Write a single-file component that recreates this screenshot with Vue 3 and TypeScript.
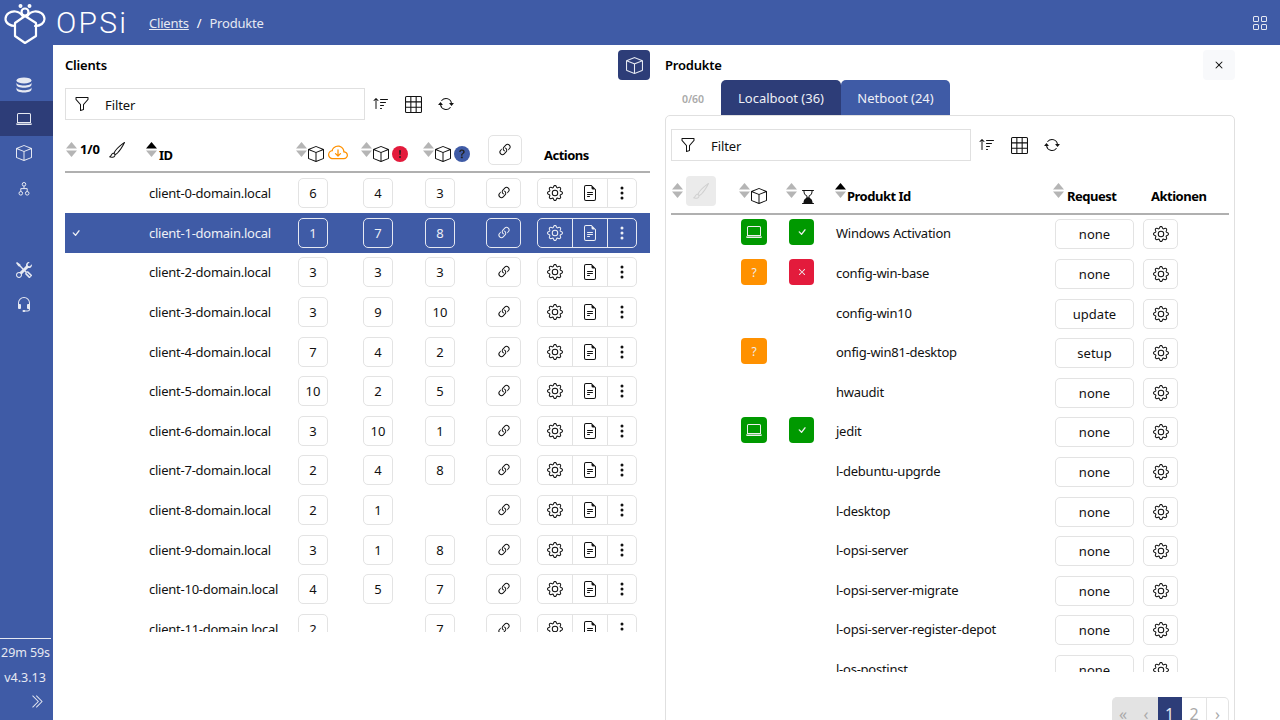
<script setup lang="ts">
const clients: [string, string, string][] = [
  ['6', '4', '3'], ['1', '7', '8'], ['3', '3', '3'], ['3', '9', '10'], ['7', '4', '2'], ['10', '2', '5'],
  ['3', '10', '1'], ['2', '4', '8'], ['2', '1', ''], ['3', '1', '8'], ['4', '5', '7'], ['2', '', '7'],
]
type Prod = { name: string; a?: 'ok' | 'unk'; b?: 'ok' | 'bad'; req: string }
const products: Prod[] = [
  { name: 'Windows Activation', a: 'ok', b: 'ok', req: 'none' },
  { name: 'config-win-base', a: 'unk', b: 'bad', req: 'none' },
  { name: 'config-win10', req: 'update' },
  { name: 'onfig-win81-desktop', a: 'unk', req: 'setup' },
  { name: 'hwaudit', req: 'none' },
  { name: 'jedit', a: 'ok', b: 'ok', req: 'none' },
  { name: 'l-debuntu-upgrde', req: 'none' },
  { name: 'l-desktop', req: 'none' },
  { name: 'l-opsi-server', req: 'none' },
  { name: 'l-opsi-server-migrate', req: 'none' },
  { name: 'l-opsi-server-register-depot', req: 'none' },
  { name: 'l-os-postinst', req: 'none' },
]
const navTop = ['database', 'laptop', 'box', 'diagram']
const navBottom = ['tools', 'headset']
</script>

<template>
  <div class="app">
    <svg class="sprite" aria-hidden="true">
      <symbol id="box" viewBox="0 0 16 16"><path d="M8.186 1.113a.5.5 0 0 0-.372 0L1.846 3.5 8 5.961 14.154 3.5 8.186 1.113zM15 4.239l-6.5 2.6v7.922l6.5-2.6V4.24zM7.5 14.762V6.838L1 4.239v7.925l6.5 2.6zM7.443.184a1.5 1.5 0 0 1 1.114 0l7.129 2.852A.5.5 0 0 1 16 3.5v8.662a1 1 0 0 1-.629.928l-7.185 2.874a.5.5 0 0 1-.372 0L.63 13.09a1 1 0 0 1-.63-.928V3.5a.5.5 0 0 1 .314-.464L7.443.184z"/></symbol>
      <symbol id="laptop" viewBox="0 0 16 16"><path d="M13.5 3a.5.5 0 0 1 .5.5V11H2V3.5a.5.5 0 0 1 .5-.5h11zm-11-1A1.5 1.5 0 0 0 1 3.5V12h14V3.5A1.5 1.5 0 0 0 13.5 2h-11zM0 12.5h16a1.5 1.5 0 0 1-1.5 1.5h-13A1.5 1.5 0 0 1 0 12.5z"/></symbol>
      <symbol id="gear" viewBox="0 0 16 16"><path d="M8 4.754a3.246 3.246 0 1 0 0 6.492 3.246 3.246 0 0 0 0-6.492zM5.754 8a2.246 2.246 0 1 1 4.492 0 2.246 2.246 0 0 1-4.492 0z"/><path d="M9.796 1.343c-.527-1.79-3.065-1.79-3.592 0l-.094.319a.873.873 0 0 1-1.255.52l-.292-.16c-1.64-.892-3.433.902-2.54 2.541l.159.292a.873.873 0 0 1-.52 1.255l-.319.094c-1.79.527-1.79 3.065 0 3.592l.319.094a.873.873 0 0 1 .52 1.255l-.16.292c-.892 1.64.901 3.434 2.541 2.54l.292-.159a.873.873 0 0 1 1.255.52l.094.319c.527 1.79 3.065 1.79 3.592 0l.094-.319a.873.873 0 0 1 1.255-.52l.292.16c1.64.893 3.434-.902 2.54-2.541l-.159-.292a.873.873 0 0 1 .52-1.255l.319-.094c1.79-.527 1.79-3.065 0-3.592l-.319-.094a.873.873 0 0 1-.52-1.255l.16-.292c.893-1.64-.902-3.433-2.541-2.54l-.292.159a.873.873 0 0 1-1.255-.52l-.094-.319zm-2.633.283c.246-.835 1.428-.835 1.674 0l.094.319a1.873 1.873 0 0 0 2.693 1.115l.291-.16c.764-.415 1.6.42 1.184 1.185l-.159.292a1.873 1.873 0 0 0 1.116 2.692l.318.094c.835.246.835 1.428 0 1.674l-.319.094a1.873 1.873 0 0 0-1.115 2.693l.16.291c.415.764-.42 1.6-1.185 1.184l-.291-.159a1.873 1.873 0 0 0-2.693 1.116l-.094.318c-.246.835-1.428.835-1.674 0l-.094-.319a1.873 1.873 0 0 0-2.692-1.115l-.292.16c-.764.415-1.6-.42-1.184-1.185l.159-.291A1.873 1.873 0 0 0 1.945 8.93l-.319-.094c-.835-.246-.835-1.428 0-1.674l.319-.094A1.873 1.873 0 0 0 3.06 4.377l-.16-.292c-.415-.764.42-1.6 1.185-1.184l.292.159a1.873 1.873 0 0 0 2.692-1.115l.094-.319z"/></symbol>
      <symbol id="link" viewBox="0 0 16 16"><path d="M4.715 6.542 3.343 7.914a3 3 0 1 0 4.243 4.243l1.828-1.829A3 3 0 0 0 8.586 5.5L8 6.086a1.002 1.002 0 0 0-.154.199 2 2 0 0 1 .861 3.337L6.88 11.45a2 2 0 1 1-2.83-2.83l.793-.792a4.018 4.018 0 0 1-.128-1.287z"/><path d="M6.586 4.672A3 3 0 0 0 7.414 9.5l.775-.776a2 2 0 0 1-.896-3.346L9.12 3.55a2 2 0 1 1 2.83 2.83l-.793.792c.112.42.155.855.128 1.287l1.372-1.372a3 3 0 1 0-4.243-4.243L6.586 4.672z"/></symbol>
      <symbol id="dots" viewBox="0 0 16 16"><path d="M9.5 13a1.5 1.5 0 1 1-3 0 1.5 1.5 0 0 1 3 0zm0-5a1.5 1.5 0 1 1-3 0 1.5 1.5 0 0 1 3 0zm0-5a1.5 1.5 0 1 1-3 0 1.5 1.5 0 0 1 3 0z"/></symbol>
      <symbol id="file" viewBox="0 0 16 16"><path d="M5.5 7a.5.5 0 0 0 0 1h5a.5.5 0 0 0 0-1h-5zM5 9.5a.5.5 0 0 1 .5-.5h5a.5.5 0 0 1 0 1h-5a.5.5 0 0 1-.5-.5zm0 2a.5.5 0 0 1 .5-.5h2a.5.5 0 0 1 0 1h-2a.5.5 0 0 1-.5-.5z"/><path d="M9.5 0H4a2 2 0 0 0-2 2v12a2 2 0 0 0 2 2h8a2 2 0 0 0 2-2V4.5L9.5 0zm0 1v2A1.5 1.5 0 0 0 11 4.5h2V14a1 1 0 0 1-1 1H4a1 1 0 0 1-1-1V2a1 1 0 0 1 1-1h5.5z"/></symbol>
      <symbol id="funnel" viewBox="0 0 16 16"><path d="M1.5 1.5A.5.5 0 0 1 2 1h12a.5.5 0 0 1 .5.5v2a.5.5 0 0 1-.128.334L10 8.692V13.5a.5.5 0 0 1-.342.474l-3 1A.5.5 0 0 1 6 14.5V8.692L1.628 3.834A.5.5 0 0 1 1.5 3.5v-2zm1 .5v1.308l4.372 4.858A.5.5 0 0 1 7 8.5v5.306l2-.666V8.5a.5.5 0 0 1 .128-.334L13.5 3.308V2h-11z"/></symbol>
      <symbol id="grid3" viewBox="0 0 16 16"><path d="M0 1.5A1.5 1.5 0 0 1 1.5 0h13A1.5 1.5 0 0 1 16 1.5v13a1.5 1.5 0 0 1-1.5 1.5h-13A1.5 1.5 0 0 1 0 14.5v-13zM1.5 1a.5.5 0 0 0-.5.5V5h4V1H1.5zM5 6H1v4h4V6zm1 4h4V6H6v4zm-1 1H1v3.5a.5.5 0 0 0 .5.5H5v-4zm1 0v4h4v-4H6zm5 0v4h3.5a.5.5 0 0 0 .5-.5V11h-4zm0-1h4V6h-4v4zm0-5h4V1.5a.5.5 0 0 0-.5-.5H11v4zm-1 0V1H6v4h4z"/></symbol>
      <symbol id="repeat" viewBox="0 0 16 16"><path d="M11.534 7h3.932a.25.25 0 0 1 .192.41l-1.966 2.36a.25.25 0 0 1-.384 0l-1.966-2.36a.25.25 0 0 1 .192-.41zm-11 2h3.932a.25.25 0 0 0 .192-.41L2.692 6.23a.25.25 0 0 0-.384 0L.342 8.59A.25.25 0 0 0 .534 9z"/><path d="M8 3c-1.552 0-2.94.707-3.857 1.818a.5.5 0 1 1-.771-.636A6.002 6.002 0 0 1 13.917 7H12.9A5.002 5.002 0 0 0 8 3zM3.1 9a5.002 5.002 0 0 0 8.757 2.182.5.5 0 1 1 .771.636A6.002 6.002 0 0 1 2.083 9H3.1z"/></symbol>
      <symbol id="sortup" viewBox="0 0 16 16"><path d="M3.5 12.5a.5.5 0 0 1-1 0V3.707L1.354 4.854a.5.5 0 1 1-.708-.708l2-1.999.007-.007a.498.498 0 0 1 .7.006l2 2a.5.5 0 1 1-.707.708L3.5 3.707V12.5zm3.5-9a.5.5 0 0 1 .5-.5h7a.5.5 0 0 1 0 1h-7a.5.5 0 0 1-.5-.5zM7.5 6a.5.5 0 0 0 0 1h5a.5.5 0 0 0 0-1h-5zm0 3a.5.5 0 0 0 0 1h3a.5.5 0 0 0 0-1h-3zm0 3a.5.5 0 0 0 0 1h1a.5.5 0 0 0 0-1h-1z"/></symbol>
      <symbol id="grid" viewBox="0 0 16 16"><path d="M1 2.5A1.5 1.5 0 0 1 2.5 1h3A1.5 1.5 0 0 1 7 2.5v3A1.5 1.5 0 0 1 5.5 7h-3A1.5 1.5 0 0 1 1 5.5v-3zM2.5 2a.5.5 0 0 0-.5.5v3a.5.5 0 0 0 .5.5h3a.5.5 0 0 0 .5-.5v-3a.5.5 0 0 0-.5-.5h-3zm6.5.5A1.5 1.5 0 0 1 10.5 1h3A1.5 1.5 0 0 1 15 2.5v3A1.5 1.5 0 0 1 13.5 7h-3A1.5 1.5 0 0 1 9 5.5v-3zm1.5-.5a.5.5 0 0 0-.5.5v3a.5.5 0 0 0 .5.5h3a.5.5 0 0 0 .5-.5v-3a.5.5 0 0 0-.5-.5h-3zM1 10.5A1.5 1.5 0 0 1 2.5 9h3A1.5 1.5 0 0 1 7 10.5v3A1.5 1.5 0 0 1 5.5 15h-3A1.5 1.5 0 0 1 1 13.5v-3zm1.5-.5a.5.5 0 0 0-.5.5v3a.5.5 0 0 0 .5.5h3a.5.5 0 0 0 .5-.5v-3a.5.5 0 0 0-.5-.5h-3zm6.5.5A1.5 1.5 0 0 1 10.5 9h3a1.5 1.5 0 0 1 1.5 1.5v3a1.5 1.5 0 0 1-1.5 1.5h-3A1.5 1.5 0 0 1 9 13.5v-3zm1.5-.5a.5.5 0 0 0-.5.5v3a.5.5 0 0 0 .5.5h3a.5.5 0 0 0 .5-.5v-3a.5.5 0 0 0-.5-.5h-3z"/></symbol>
      <symbol id="x" viewBox="0 0 16 16"><path d="M4.646 4.646a.5.5 0 0 1 .708 0L8 7.293l2.646-2.647a.5.5 0 0 1 .708.708L8.707 8l2.647 2.646a.5.5 0 0 1-.708.708L8 8.707l-2.646 2.647a.5.5 0 0 1-.708-.708L7.293 8 4.646 5.354a.5.5 0 0 1 0-.708z"/></symbol>
      <symbol id="check" viewBox="0 0 16 16"><path d="M10.97 4.97a.75.75 0 0 1 1.07 1.05l-3.99 4.99a.75.75 0 0 1-1.08.02L4.324 8.384a.75.75 0 1 1 1.06-1.06l2.094 2.093 3.473-4.425a.267.267 0 0 1 .02-.022z"/></symbol>
      <symbol id="brush" viewBox="0 0 16 16"><path d="M15.825.12a.5.5 0 0 1 .132.584c-1.53 3.43-4.743 8.17-7.095 10.64a6.067 6.067 0 0 1-2.373 1.534c-.018.227-.06.538-.16.868-.201.659-.667 1.479-1.708 1.74a8.118 8.118 0 0 1-3.078.132 3.659 3.659 0 0 1-.562-.135 1.382 1.382 0 0 1-.466-.247.714.714 0 0 1-.204-.288.622.622 0 0 1 .004-.443c.095-.245.316-.38.461-.452.394-.197.625-.453.867-.826.095-.144.184-.297.287-.472l.117-.198c.151-.255.326-.54.546-.848.528-.739 1.201-.925 1.746-.896.126.007.243.025.348.048.062-.172.142-.38.238-.608.261-.619.658-1.419 1.187-2.069 2.176-2.67 6.18-6.206 9.117-8.104a.5.5 0 0 1 .596.04zM4.705 11.912a1.23 1.23 0 0 0-.419-.1c-.246-.013-.573.05-.879.479-.197.275-.355.532-.5.777l-.105.177c-.106.181-.213.362-.32.528a3.39 3.39 0 0 1-.76.861c.69.112 1.736.111 2.657-.12.559-.139.843-.569.993-1.06a3.122 3.122 0 0 0 .126-.75l-.793-.792zm1.44.026c.12-.04.277-.1.458-.183a5.068 5.068 0 0 0 1.535-1.1c1.9-1.996 4.412-5.57 6.052-8.631-2.59 1.927-5.566 4.66-7.302 6.792-.442.543-.795 1.243-1.042 1.826-.121.288-.214.54-.275.72v.001l.575.575z"/></symbol>
      <symbol id="tools" viewBox="0 0 16 16"><path d="M1 0 0 1l2.2 3.081a1 1 0 0 0 .815.419h.07a1 1 0 0 1 .708.293l2.675 2.675-2.617 2.654A3.003 3.003 0 0 0 0 13a3 3 0 1 0 5.878-.851l2.654-2.617.968.968-.305.914a1 1 0 0 0 .242 1.023l3.27 3.27a.997.997 0 0 0 1.414 0l1.586-1.586a.997.997 0 0 0 0-1.414l-3.27-3.27a1 1 0 0 0-1.023-.242L10.5 9.5l-.96-.96 2.68-2.643A3.005 3.005 0 0 0 16 3c0-.269-.035-.53-.102-.777l-2.14 2.141L12 4l-.364-1.757L13.777.102a3 3 0 0 0-3.675 3.68L7.462 6.46 4.793 3.793a1 1 0 0 1-.293-.707v-.071a1 1 0 0 0-.419-.814L1 0Zm9.646 10.646a.5.5 0 0 1 .708 0l2.914 2.915a.5.5 0 0 1-.707.707l-2.915-2.914a.5.5 0 0 1 0-.708ZM3 11l.471.242.529.026.287.445.445.287.026.529L5 13l-.242.471-.026.529-.445.287-.287.445-.529.026L3 15l-.471-.242L2 14.732l-.287-.445L1.268 14l-.026-.529L1 13l.242-.471.026-.529.445-.287.287-.445.529-.026L3 11Z"/></symbol>
      <symbol id="headset" viewBox="0 0 16 16"><path d="M8 1a5 5 0 0 0-5 5v1h1a1 1 0 0 1 1 1v3a1 1 0 0 1-1 1H3a1 1 0 0 1-1-1V6a6 6 0 1 1 12 0v6a2.5 2.5 0 0 1-2.5 2.5H9.366a1 1 0 0 1-.866.5h-1a1 1 0 1 1 0-2h1a1 1 0 0 1 .866.5H11.500A1.500 1.500 0 0 0 13 12h-1a1 1 0 0 1-1-1V8a1 1 0 0 1 1-1h1V6a5 5 0 0 0-5-5z"/></symbol>
      <symbol id="diagram" viewBox="0 0 16 16"><g fill="none" stroke="currentColor" stroke-width="1"><circle cx="8" cy="3.300" r="1.800"/><circle cx="4.800" cy="12.300" r="1.800"/><circle cx="11.200" cy="12.300" r="1.800"/><path d="M8 5.100v2.500M4.800 10.500V7.600h6.400v2.900"/></g></symbol>
      <symbol id="database" viewBox="0 0 16 16"><ellipse cx="8" cy="3.400" rx="7.500" ry="3"/><path d="M.5 5.600c0 1.700 3.400 3 7.500 3s7.500-1.300 7.500-3v2.200c0 1.700-3.400 3-7.500 3s-7.500-1.300-7.500-3z"/><path d="M.5 10.200c0 1.700 3.400 3 7.500 3s7.500-1.300 7.500-3v2.400c0 1.700-3.400 3-7.500 3s-7.500-1.300-7.500-3z"/></symbol>
      <symbol id="dbl" viewBox="0 0 16 16"><path d="M3.646 1.646a.5.5 0 0 1 .708 0l6 6a.5.5 0 0 1 0 .708l-6 6a.5.5 0 0 1-.708-.708L9.293 8 3.646 2.354a.5.5 0 0 1 0-.708z"/><path d="M7.646 1.646a.5.5 0 0 1 .708 0l6 6a.5.5 0 0 1 0 .708l-6 6a.5.5 0 0 1-.708-.708L13.293 8 7.646 2.354a.5.5 0 0 1 0-.708z"/></symbol>
      <symbol id="cloud" viewBox="0 0 16 16"><path d="M7.646 10.854a.5.5 0 0 0 .708 0l2-2a.5.5 0 0 0-.708-.708L8.500 9.293V5.500a.5.5 0 0 0-1 0v3.793L6.354 8.146a.5.5 0 1 0-.708.708l2 2z"/><path d="M4.406 3.342A5.53 5.53 0 0 1 8 2c2.690 0 4.923 2 5.166 4.579C14.758 6.804 16 8.137 16 9.773 16 11.569 14.502 13 12.687 13H3.781C1.708 13 0 11.366 0 9.318c0-1.763 1.266-3.223 2.942-3.593.143-.863.698-1.723 1.464-2.383zm.653.757c-.757.653-1.153 1.440-1.153 2.056v.448l-.445.049C2.064 6.805 1 7.952 1 9.318 1 10.785 2.230 12 3.781 12h8.906C13.980 12 15 10.988 15 9.773c0-1.216-1.020-2.228-2.313-2.228h-.5v-.5C12.188 4.825 10.328 3 8 3a4.530 4.530 0 0 0-2.941 1.100z"/></symbol>
      <symbol id="hourglass" viewBox="0 0 16 16"><path d="M2 1.5a.5.5 0 0 1 .5-.5h11a.5.5 0 0 1 0 1h-1v1a4.5 4.5 0 0 1-2.557 4.06c-.29.139-.443.377-.443.59v.7c0 .213.154.451.443.59A4.5 4.5 0 0 1 12.5 13v1h1a.5.5 0 0 1 0 1h-11a.5.5 0 1 1 0-1h1v-1a4.5 4.5 0 0 1 2.557-4.06c.29-.139.443-.377.443-.59v-.7c0-.213-.154-.451-.443-.59A4.5 4.5 0 0 1 3.5 3V2h-1a.5.5 0 0 1-.5-.5zm2.5.5v1a3.5 3.5 0 0 0 1.989 3.158c.533.256 1.011.791 1.011 1.491v.702s.18.149.5.149.5-.15.5-.15v-.7c0-.701.478-1.236 1.011-1.492A3.5 3.5 0 0 0 11.5 3V2h-7z"/></symbol>
      <symbol id="excl" viewBox="0 0 16 16"><circle cx="8" cy="8" r="8" fill="#e31b3c"/><path fill="#222" d="M8 4a.905.905 0 0 0-.9.995l.35 3.507a.552.552 0 0 0 1.1 0l.35-3.507A.905.905 0 0 0 8 4zm.002 6a1 1 0 1 0 0 2 1 1 0 0 0 0-2z"/></symbol>
      <symbol id="quest" viewBox="0 0 16 16"><circle cx="8" cy="8" r="8" fill="#3f5ba6"/><path fill="#222" d="M5.496 6.033h.825c.138 0 .248-.113.266-.25.09-.656.54-1.134 1.342-1.134.686 0 1.314.343 1.314 1.168 0 .635-.374.927-.965 1.371-.673.489-1.206 1.06-1.168 1.987l.003.217a.25.25 0 0 0 .25.246h.811a.25.25 0 0 0 .25-.25v-.105c0-.718.273-.927 1.01-1.486.609-.463 1.244-.977 1.244-2.056 0-1.511-1.276-2.241-2.673-2.241-1.267 0-2.655.59-2.75 2.286a.237.237 0 0 0 .241.247zm2.325 6.443c.61 0 1.029-.394 1.029-.927 0-.552-.42-.94-1.029-.94-.584 0-1.009.388-1.009.94 0 .533.425.927 1.01.927z"/></symbol>
      <symbol id="sort" viewBox="0 0 11 16" preserveAspectRatio="none"><path d="M5.5 0 11 7H0z"/><path d="M5.5 16 11 9H0z"/></symbol>
      <symbol id="sortactive" viewBox="0 0 11 16" preserveAspectRatio="none"><path fill="#000" d="M5.5 0 11 7H0z"/><path fill="#b5b5b5" d="M5.5 16 11 9H0z"/></symbol>
    </svg>

    <header class="top">
      <div class="logo">
        <svg class="logo-mark" viewBox="0 0 46 45" fill="none" stroke="#fff" stroke-width="2.200" stroke-linejoin="round" stroke-linecap="round">
          <path d="M25 16l11 7v13l-11 7-10-7V23z"/>
          <path d="M15 26c-5 0-9.500-3-9.500-7 0-5 5-8 10-7.500 3 .3 5.500 2 7 4.500"/>
          <path d="M35 26c5.500 0 9.500-3 9.500-7 0-5-5-8-10-7.500-3 .3-5.500 2-7 4.500"/>
          <circle cx="25" cy="12" r="3.500"/>
          <circle cx="20.500" cy="6" r=".9"/>
          <circle cx="29.500" cy="6" r=".9"/>
        </svg>
        <span class="logo-text">OPSi</span>
      </div>
      <nav class="crumbs"><a class="crumb-link">Clients</a><span class="sep">/</span><span>Produkte</span></nav>
      <svg class="i top-grid"><use href="#grid" /></svg>
    </header>

    <div class="body">
      <aside class="side">
        <div class="nav">
          <div v-for="n in navTop" :key="n" class="nav-item" :class="['n-' + n, { active: n === 'laptop' }]">
            <svg class="i"><use :href="'#' + n" /></svg>
          </div>
          <div class="nav-gap"></div>
          <div v-for="n in navBottom" :key="n" class="nav-item">
            <svg class="i"><use :href="'#' + n" /></svg>
          </div>
        </div>
        <div class="side-foot">
          <div class="timer">29m 59s</div>
          <div class="version">v4.3.13</div>
          <svg class="i foot-chev"><use href="#dbl" /></svg>
        </div>
      </aside>

      <main class="main">
        <section class="left">
          <div class="title-row">
            <span class="title">Clients</span>
            <button class="cube-btn"><svg class="i cube-i"><use href="#box" /></svg></button>
          </div>
          <div class="toolbar">
            <div class="filter"><svg class="i"><use href="#funnel" /></svg><span>Filter</span></div>
            <svg class="i tb tb-sort"><use href="#sortup" /></svg>
            <svg class="i tb tb-table"><use href="#grid3" /></svg>
            <svg class="i tb"><use href="#repeat" /></svg>
          </div>
          <div class="lrow lhead">
            <div class="hc hc-sel">
              <svg class="sort"><use href="#sort" /></svg><b class="frac">1/0</b>
              <svg class="i brush"><use href="#brush" /></svg>
            </div>
            <div class="hc"><svg class="sort dark id-sort"><use href="#sortactive" /></svg><b class="hl">ID</b></div>
            <div class="hc hc-n"><svg class="sort"><use href="#sort" /></svg><svg class="i h-box"><use href="#box" /></svg><svg class="i h-cloud"><use href="#cloud" /></svg></div>
            <div class="hc hc-n"><svg class="sort"><use href="#sort" /></svg><svg class="i h-box"><use href="#box" /></svg><svg class="i h-badge"><use href="#excl" /></svg></div>
            <div class="hc hc-n"><svg class="sort"><use href="#sort" /></svg><svg class="i h-box"><use href="#box" /></svg><svg class="i h-badge"><use href="#quest" /></svg></div>
            <div class="hc hc-link"><span class="btn head-link"><svg class="i"><use href="#link" /></svg></span></div>
            <div class="hc"><b class="hl act">Actions</b></div>
          </div>
          <div class="lbody">
            <div v-for="(c, i) in clients" :key="i" class="lrow row" :class="{ sel: i === 1 }">
              <div class="check-cell"><svg v-if="i === 1" class="i chk"><use href="#check" /></svg></div>
              <div class="cid">client-{{ i }}-domain.local</div>
              <div v-for="(v, k) in c" :key="k"><span v-if="v" class="btn num">{{ v }}</span></div>
              <div><span class="btn link-btn"><svg class="i"><use href="#link" /></svg></span></div>
              <div class="grp">
                <span class="btn"><svg class="i"><use href="#gear" /></svg></span>
                <span class="btn"><svg class="i"><use href="#file" /></svg></span>
                <span class="btn"><svg class="i"><use href="#dots" /></svg></span>
              </div>
            </div>
          </div>
        </section>

        <section class="right">
          <div class="title-row">
            <span class="title">Produkte</span>
            <button class="close-btn"><svg class="i"><use href="#x" /></svg></button>
          </div>
          <div class="tabs">
            <span class="count">0/60</span>
            <span class="tab on">Localboot (36)</span>
            <span class="tab">Netboot (24)</span>
          </div>
          <div class="card">
            <div class="toolbar">
              <div class="filter"><svg class="i"><use href="#funnel" /></svg><span>Filter</span></div>
              <svg class="i tb tb-sort"><use href="#sortup" /></svg>
              <svg class="i tb tb-table"><use href="#grid3" /></svg>
              <svg class="i tb"><use href="#repeat" /></svg>
            </div>
            <div class="rrow rhead">
              <div class="hc hc-first"><svg class="sort"><use href="#sort" /></svg><span class="brush-off"><svg class="i"><use href="#brush" /></svg></span></div>
              <div class="hc hc-n"><svg class="sort"><use href="#sort" /></svg><svg class="i h-box"><use href="#box" /></svg></div>
              <div class="hc hc-h"><svg class="sort"><use href="#sort" /></svg><svg class="i h-hour"><use href="#hourglass" /></svg></div>
              <div class="hc hc-pid"><svg class="sort dark"><use href="#sortactive" /></svg><b class="hl">Produkt Id</b></div>
              <div class="hc hc-n"><svg class="sort"><use href="#sort" /></svg><b class="hl">Request</b></div>
              <div class="hc"><b class="hl akt">Aktionen</b></div>
            </div>
            <div class="rbody">
              <div v-for="p in products" :key="p.name" class="rrow prow">
                <div></div>
                <div>
                  <span v-if="p.a === 'ok'" class="tag g a"><svg class="i"><use href="#laptop" /></svg></span>
                  <span v-else-if="p.a === 'unk'" class="tag o a">?</span>
                </div>
                <div>
                  <span v-if="p.b === 'ok'" class="tag g b"><svg class="i sm"><use href="#check" /></svg></span>
                  <span v-else-if="p.b === 'bad'" class="tag r b"><svg class="i sm"><use href="#x" /></svg></span>
                </div>
                <div class="pname">{{ p.name }}</div>
                <div><span class="btn req">{{ p.req }}</span></div>
                <div><span class="btn gear1"><svg class="i"><use href="#gear" /></svg></span></div>
              </div>
            </div>
            <div class="pager">
              <span class="pg off">«</span><span class="pg off">‹</span><span class="pg cur">1</span><span class="pg two">2</span><span class="pg">›</span>
            </div>
          </div>
        </section>
      </main>
    </div>
  </div>
</template>

<style>
html, body { margin: 0; height: 720px; overflow: hidden; background: #fff; }
</style>

<style scoped>
.app { width: 1280px; height: 720px; display: flex; flex-direction: column; overflow: hidden; font-family: "Noto Sans", "Open Sans", sans-serif; font-size: 13px; color: #111; }
.sprite { width: 0; height: 0; display: block; }
.i { width: 16px; height: 16px; fill: currentColor; display: block; flex: none; }

.top { height: 45px; flex: none; background: #3f5ba6; color: #e6e9f2; display: flex; align-items: center; }
.logo { display: flex; align-items: center; width: 149px; flex: none; }
.logo-mark { width: 46px; height: 45px; flex: none; }
.logo-text { font-family: Roboto, sans-serif; font-weight: 300; font-size: 30px; letter-spacing: 2.200px; color: #fff; margin-left: 10px; }
.crumbs { display: flex; align-items: center; font-size: 13px; flex: 1; letter-spacing: -.2px; }
.crumb-link { text-decoration: underline; }
.sep { margin: 0 8px; color: #fff; }
.top-grid { margin-right: 12px; }

.body { flex: 1; display: flex; min-height: 0; }
.side { width: 53px; flex: none; background: #3f5ba6; color: #e6e9f2; display: flex; flex-direction: column; justify-content: space-between; }
.nav { padding-top: 21px; }
.nav-item { height: 35px; box-sizing: border-box; padding-right: 5px; display: flex; align-items: center; justify-content: center; }
.nav-item.active { background: #2d3d78; }
.n-database .i { margin-top: 2px; }
.n-box .i { margin-bottom: 2px; }
.nav-gap { height: 46px; }
.side-foot { display: flex; flex-direction: column; align-items: center; font-size: 12.500px; }
.timer { width: 51px; align-self: flex-start; border-top: 1px solid #e6e9f2; padding-top: 4px; height: 23px; white-space: nowrap; text-align: center; line-height: 20px; letter-spacing: -.1px; }
.version { height: 24px; line-height: 24px; margin-right: 3px; }
.foot-chev { margin: 4px 0 11px 19px; width: 15px; height: 15px; }

.main { flex: 1; display: flex; min-width: 0; }
.left { width: 597px; margin-left: 12px; margin-right: 3px; flex: none; }
.right { width: 570px; flex: none; }
.title-row { height: 30px; margin-top: 5px; display: flex; align-items: center; justify-content: space-between; }
.title { font-weight: 600; font-size: 13px; color: #000; letter-spacing: -.2px; }
.left .title-row { width: 585px; }
.cube-btn { width: 32px; height: 30px; padding: 0; border: 0; border-radius: 4px; background: #2d3d78; color: #e6e9f2; display: flex; align-items: center; justify-content: center; }
.cube-i { width: 17px; height: 17px; }
.close-btn { width: 32px; height: 30px; padding: 0; border: 0; border-radius: 4px; background: #f8f9fb; color: #111; display: flex; align-items: center; justify-content: center; }

.toolbar { display: flex; align-items: center; margin-top: 8px; height: 32px; }
.filter { width: 300px; height: 32px; box-sizing: border-box; border: 1px solid #e0e0e0; display: flex; align-items: center; padding-left: 8px; gap: 15px; font-size: 13px; }
.filter span { padding-top: 1px; letter-spacing: -.1px; }
.tb { margin-left: 16px; }
.tb-sort { margin-left: 8px; }
.toolbar .tb-table { width: 17px; height: 17px; }

.lrow { display: grid; grid-template-columns: 84px 149px 65px 62px 61px 51px 113px; width: 585px; align-items: center; }
.lhead { height: 37px; margin-top: 14px; border-bottom: 2px solid #b0b0b0; align-items: end; }
.hc { display: flex; align-items: flex-end; height: 37px; padding-bottom: 8px; box-sizing: border-box; }
.sort { width: 11px; height: 15px; fill: #b5b5b5; flex: none; margin-bottom: 6px; margin-left: 1px; margin-right: 3px; }
.hc-n .sort { margin-left: -2px; }
.id-sort { margin-left: -3px; margin-right: 2px; }
.frac { font-size: 13px; font-weight: 700; margin-bottom: 5px; color: #000; letter-spacing: -.2px; }
.brush { margin-left: 9px; margin-bottom: 5px; color: #111; }
.hl { font-weight: 700; font-size: 13px; letter-spacing: -.5px; color: #000; line-height: 16px; }
.h-box { width: 16px; height: 16px; margin-left: -2px; margin-bottom: 1px; }
.h-cloud { width: 20px; height: 20px; margin-left: 4px; margin-bottom: 0; color: #ff9100; }
.h-badge { margin-left: 3px; margin-bottom: 1px; }
.hc-link { padding-bottom: 0; align-items: flex-start; }
.btn.head-link { margin-left: 2px; margin-top: 1px; height: 30px; width: 34px; }
.act { margin-left: 7px; }

.lbody { height: 458.600px; margin-top: .4px; overflow: hidden; }
.row { height: 39.600px; }
.row.sel { background: #3f5ba6; color: #eef0f6; }
.check-cell { padding-left: 4px; }
.chk { width: 14px; height: 14px; }
.cid { font-size: 13px; white-space: nowrap; letter-spacing: -.25px; }
.btn { height: 30px; min-width: 30px; box-sizing: border-box; border: 1px solid #e3e3e3; border-radius: 5px; display: inline-flex; align-items: center; justify-content: center; background: #fff; color: #111; font-size: 13px; }
.num { padding: 0 4px; }
.link-btn { width: 35px; }
.grp { display: flex; }
.grp .btn { width: 36px; border-radius: 0; margin-left: -1px; }
.grp .btn:first-child { border-radius: 5px 0 0 5px; margin-left: 0; }
.grp .btn:last-child { border-radius: 0 5px 5px 0; width: 30px; min-width: 30px; }
.sel .btn { background: transparent; color: #eef0f6; border-color: #e6e9f2; }

.tabs { display: flex; height: 35px; align-items: stretch; }
.count { width: 56px; padding-top: 3px; box-sizing: border-box; font-size: 10.500px; font-weight: 600; color: #a9a9a9; display: flex; align-items: center; justify-content: center; }
.tab { background: #3f5ba6; color: #eef0f6; border-radius: 5px 5px 0 0; display: flex; align-items: center; justify-content: center; width: 109px; font-size: 13px; }
.tab.on { background: #2d3d78; width: 120px; }
.card { border: 1px solid #e0e0e0; border-radius: 5px 5px 0 0; box-sizing: border-box; height: 615px; padding: 0 5px; }
.card .toolbar { margin-top: 13px; }

.rrow { display: grid; grid-template-columns: 70px 48px 47px 219px 88px 86px; width: 558px; align-items: center; }
.rhead { height: 38px; margin-top: 14px; border-bottom: 2px solid #b0b0b0; align-items: end; }
.rhead .hc { height: 38px; }
.rhead .sort { margin-bottom: 7px; }
.rhead .hl { margin-bottom: 1px; }
.brush-off { width: 30px; height: 30px; margin-bottom: -1px; margin-left: 0; border-radius: 4px; background: #ebebeb; color: #d0d0d0; display: flex; align-items: center; justify-content: center; }
.hc-h .sort { margin-left: -3px; }
.h-hour { width: 16px; height: 16px; margin-left: 0; margin-bottom: 0; }
.hc-pid .sort { margin-left: -1px; margin-right: 1px; }
.akt { margin-left: 8px; }
.rbody { height: 457.400px; margin-top: -.4px; overflow: hidden; }
.prow { height: 39.600px; }
.tag { display: flex; align-items: center; justify-content: center; height: 26px; border-radius: 4px; color: #eee; font-size: 12px; margin-top: -4px; }
.tag.a { width: 26px; }
.tag.b { width: 25px; }
.tag.g { background: #009900; }
.tag.o { background: #ff9100; }
.tag.r { background: #e31b3c; }
.tag .sm { width: 14px; height: 14px; }
.pname { font-size: 13px; white-space: nowrap; padding-bottom: 2px; letter-spacing: -.25px; }
.req { width: 79px; }
.gear1 { width: 35px; }

.pager { display: flex; justify-content: flex-end; margin-top: 25px; }
.pg { width: 23px; height: 34px; box-sizing: border-box; border: 1px solid #e3e3e3; border-left: 0; display: flex; align-items: center; justify-content: center; color: #a9a9a9; font-size: 16px; }
.pg:last-child { border-radius: 0 5px 0 0; width: 22px; }
.pg.two { width: 25px; }
.pg.off { background: #e3e3e3; }
.pg.off:first-child { border-radius: 5px 0 0 0; }
.pg.cur { background: #2d3d78; border-color: #2d3d78; color: #e6e9f2; width: 24px; }
</style>
